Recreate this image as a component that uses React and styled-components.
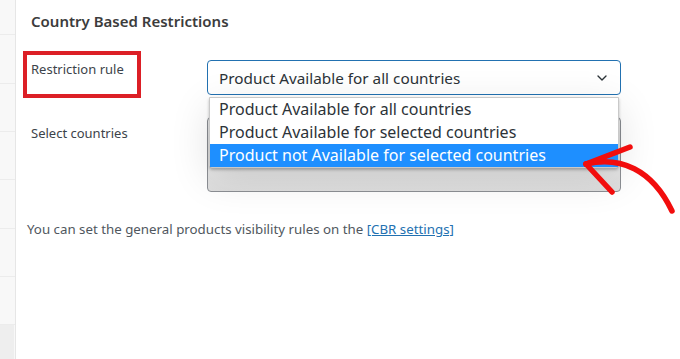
import React from "react";
import styled, { createGlobalStyle } from "styled-components";
import { ChevronDown } from "lucide-react";

const options = [
  "Product Available for all countries",
  "Product Available for selected countries",
  "Product not Available for selected countries",
];

const sideItems = [35, 49, 48, 48, 49, 48, 48];

function App() {
  return (
    <>
      <GlobalStyle />
      <Page>
        <Sidebar>
          {sideItems.map((h, i) => (
            <SideItem key={i} $h={h} />
          ))}
          <SideActive />
        </Sidebar>
        <Main>
          <Heading>Country Based Restrictions</Heading>
          <Form>
            <HighlightLabel>Restriction rule</HighlightLabel>
            <SelectWrap>
              <Select>
                <span>{options[0]}</span>
                <ChevronDown size={16} strokeWidth={2} color="#2c3338" />
              </Select>
              <Dropdown>
                {options.map((o, i) => (
                  <Option key={o} $active={i === 2}>{o}</Option>
                ))}
              </Dropdown>
              <Arrow width="110" height="80" viewBox="0 0 110 80">
                <path d="M6 13 C 40 5, 72 18, 92 60" />
                <path d="M6 13 L 50 -4" />
                <path d="M6 13 L 32 41" />
              </Arrow>
            </SelectWrap>
            <Label>Select countries</Label>
            <MultiBox />
          </Form>
          <Note>
            You can set the general products visibility rules on the{" "}
            <NoteLink href="#">[CBR settings]</NoteLink>
          </Note>
        </Main>
      </Page>
    </>
  );
}

export default App;

const GlobalStyle = createGlobalStyle`
  html, body {
    margin: 0;
    padding: 0;
    background: #ffffff;
  }
  body {
    font-family: "Noto Sans", "Open Sans", sans-serif;
    color: #3c434a;
  }
`;

const Page = styled.div`
  display: flex;
  width: 680px;
  height: 359px;
  overflow: hidden;
  background: #fff;
`;

const Sidebar = styled.div`
  width: 15px;
  flex-shrink: 0;
  display: flex;
  flex-direction: column;
  background: #f8f8f8;
  border-right: 1px solid #e6e6e6;
`;

const SideItem = styled.div`
  height: ${(p) => p.$h}px;
  box-sizing: border-box;
  border-bottom: 1px solid #ececec;
`;

const SideActive = styled.div`
  flex: 1;
  background: #eeeeee;
  margin-right: 1px;
`;

const Main = styled.div`
  flex: 1;
  padding: 11px 0 0 7px;
  position: relative;
`;

const Heading = styled.h2`
  margin: 0 0 20px 8px;
  font-size: 15px;
  line-height: 20px;
  font-weight: 600;
  color: #3c3c3c;
`;

const Form = styled.div`
  display: grid;
  grid-template-columns: 184px 414px;
  row-gap: 19px;
  align-items: start;
`;

const Label = styled.div`
  font-size: 13px;
  line-height: 18px;
  padding: 7px 0 0 8px;
`;

const HighlightLabel = styled.div`
  width: 118px;
  height: 47px;
  box-sizing: border-box;
  border: 4px solid #dc1f26;
  padding: 5px 0 0 4px;
  font-size: 13px;
  line-height: 18px;
`;

const SelectWrap = styled.div`
  position: relative;
  margin-top: 9px;
`;

const Select = styled.div`
  height: 35px;
  box-sizing: border-box;
  border: 1px solid #2271b1;
  border-radius: 4px;
  display: flex;
  align-items: center;
  justify-content: space-between;
  padding: 0 10px 0 11px;
  font-size: 15.3px;
  color: #2c3338;
  background: #fff;
`;

const Dropdown = styled.div`
  position: absolute;
  top: calc(100% + 2px);
  left: 2px;
  right: 2px;
  z-index: 2;
  background: #fff;
  border: 1px solid #c9c9c9;
  border-radius: 0 0 4px 4px;
  box-shadow: 0 2px 3px rgba(0, 0, 0, 0.25), 0 10px 40px rgba(0, 0, 0, 0.12);
`;

const Option = styled.div`
  height: 23px;
  line-height: 23px;
  padding-left: 9px;
  font-size: 16px;
  color: ${(p) => (p.$active ? "#fff" : "#2c3338")};
  background: ${(p) => (p.$active ? "#1e8fff" : "transparent")};
`;

const Arrow = styled.svg`
  position: absolute;
  left: 373px;
  top: 91px;
  z-index: 3;
  overflow: visible;
  fill: none;
  stroke: #f20d0d;
  stroke-width: 5.5;
  stroke-linecap: round;
  stroke-linejoin: round;
`;

const MultiBox = styled.div`
  height: 75px;
  box-sizing: border-box;
  border: 1px solid #8c8f94;
  border-radius: 4px;
  background: linear-gradient(#f4f4f4, #dedede);
`;

const Note = styled.p`
  margin: 28px 0 0 4px;
  font-size: 13.3px;
  line-height: 18px;
  color: #50575e;
`;

const NoteLink = styled.a`
  color: #2271b1;
  text-decoration: underline;
`;
